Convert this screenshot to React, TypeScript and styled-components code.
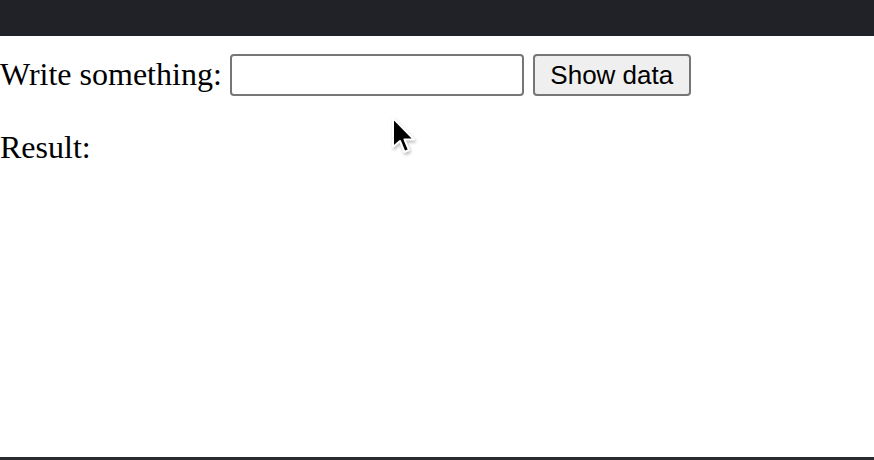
import React from "react";
import styled, { createGlobalStyle } from "styled-components";

const Global = createGlobalStyle`
  html, body { margin: 0; padding: 0; background: #ffffff; }
  body { width: 874px; height: 460px; overflow: hidden; }
`;

const Page = styled.div`
  position: relative;
  width: 874px;
  height: 460px;
  display: flex;
  flex-direction: column;
  font-family: "Liberation Serif", "Times New Roman", serif;
  color: #000;
`;

const TopBar = styled.div`
  height: 36px;
  background: #212227;
  flex: none;
`;

const Content = styled.div`
  flex: 1;
  display: flex;
  flex-direction: column;
`;

const Row = styled.div`
  display: flex;
  align-items: center;
  height: 42px;
  margin-top: 18px;
`;

const Label = styled.span`
  font-size: 32px;
  line-height: 42px;
  margin-right: 8px;
  white-space: nowrap;
  position: relative;
  top: -1px;
`;

const Input = styled.input`
  box-sizing: border-box;
  width: 294px;
  height: 42px;
  border: 2px solid #767676;
  border-radius: 4px;
  background: #fff;
  margin: 0 9px 0 0;
  padding: 0 4px;
  font-size: 26px;
  outline: none;
`;

const Button = styled.button`
  box-sizing: border-box;
  width: 158px;
  height: 42px;
  border: 2px solid #767676;
  border-radius: 4px;
  background: #efefef;
  font-family: "Liberation Sans", Arial, sans-serif;
  font-size: 26px;
  color: #000;
  padding: 0;
  margin: 0;
`;

const Result = styled.div`
  font-size: 32px;
  line-height: 42px;
  margin-top: 30px;
`;

const BottomBar = styled.div`
  height: 3px;
  background: #2a2b2f;
  flex: none;
`;

const Cursor = styled.svg`
  position: absolute;
  left: 390px;
  top: 116px;
  width: 28px;
  height: 42px;
  filter: drop-shadow(1px 2px 1.5px rgba(0, 0, 0, 0.25));
`;

export default function App() {
  return (
    <>
      <Global />
      <Page>
        <TopBar />
        <Content>
          <Row>
            <Label>Write something:</Label>
            <Input type="text" />
            <Button>Show data</Button>
          </Row>
          <Result>Result:</Result>
        </Content>
        <BottomBar />
        <Cursor viewBox="0 0 28 42">
          <path d="M3 2 L3 31 L10 25 L14.5 36 L19 34 L14.5 23.5 L24 23.5 Z" fill="#000" stroke="#fff" strokeWidth="2" strokeLinejoin="round" />
        </Cursor>
      </Page>
    </>
  );
}
